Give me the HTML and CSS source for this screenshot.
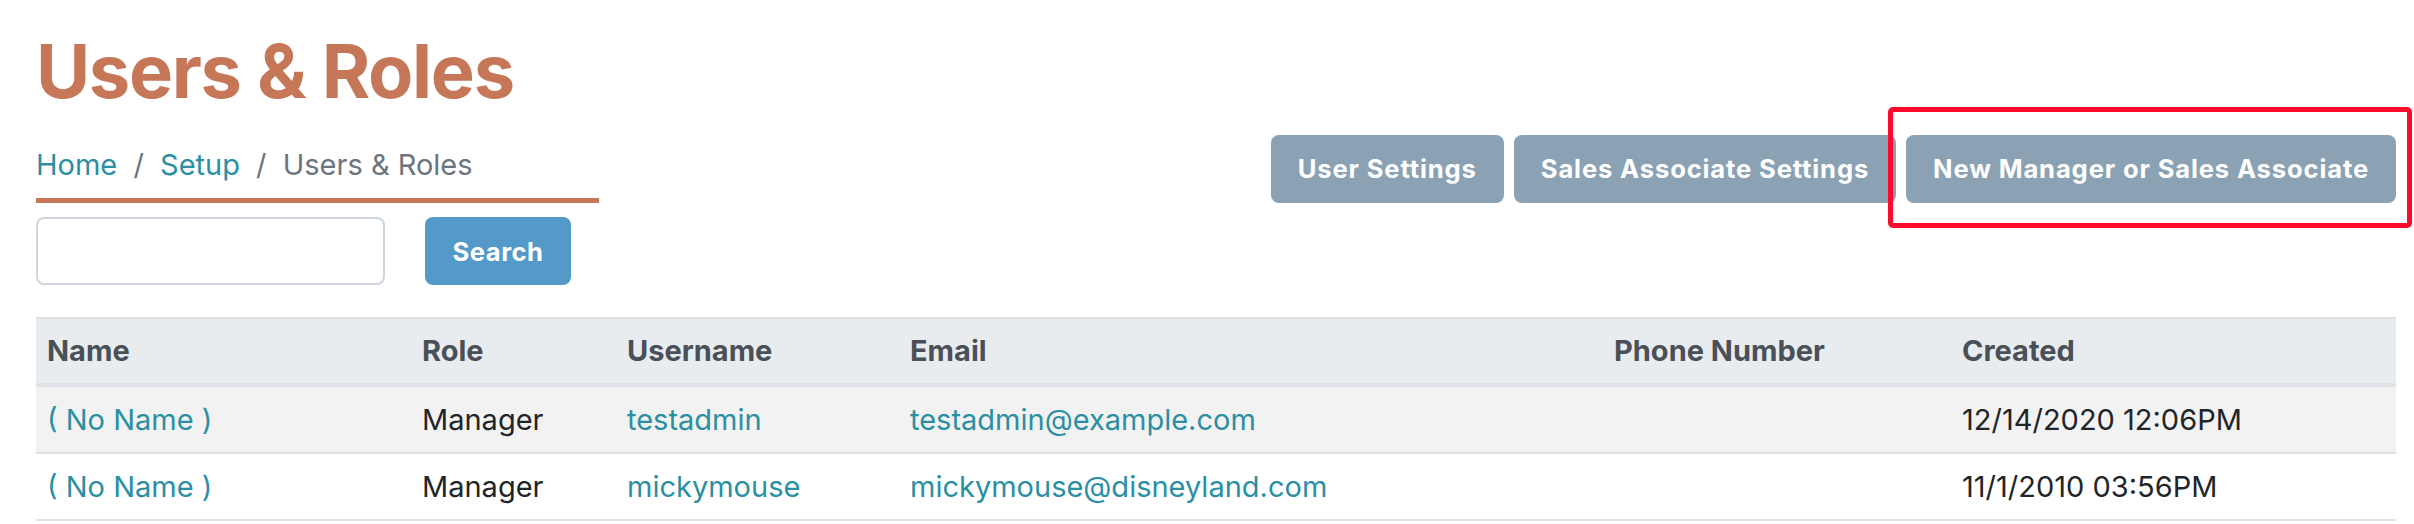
FILE: index.html
```html
<!DOCTYPE html>
<html lang="en">
<head>
  <meta charset="UTF-8">
  <meta name="viewport" content="width=device-width, initial-scale=1.0">
  <title>Users &amp; Roles</title>
  <link rel="stylesheet" href="styles.css">
</head>
<body>
  <div class="page">
    <h1 class="page-title">Users &amp; Roles</h1>

    <div class="top-bar">
      <nav class="breadcrumb">
        <a href="#">Home</a>
        <span class="sep">/</span>
        <a href="#">Setup</a>
        <span class="sep">/</span>
        <span class="current">Users &amp; Roles</span>
      </nav>

      <div class="actions">
        <button class="btn-gray">User Settings</button>
        <button class="btn-gray">Sales Associate Settings</button>
        <div class="highlight-wrap">
          <button class="btn-gray">New Manager or Sales Associate</button>
          <span class="highlight"></span>
        </div>
      </div>
    </div>

    <!-- search -->
    <form class="search-form" onsubmit="return false">
      <input type="text" class="search-input">
      <button type="submit" class="btn-search">Search</button>
    </form>

    <table class="users-table">
      <thead>
        <tr>
          <th class="col-name">Name</th>
          <th class="col-role">Role</th>
          <th class="col-user">Username</th>
          <th class="col-email">Email</th>
          <th class="col-phone">Phone Number</th>
          <th>Created</th>
        </tr>
      </thead>
      <tbody>
        <tr>
          <td><a href="#">( No Name )</a></td>
          <td>Manager</td>
          <td><a href="#">testadmin</a></td>
          <td><a href="#">testadmin@example.com</a></td>
          <td></td>
          <td>12/14/2020 12:06PM</td>
        </tr>
        <tr>
          <td><a href="#">( No Name )</a></td>
          <td>Manager</td>
          <td><a href="#">mickymouse</a></td>
          <td><a href="#">mickymouse@disneyland.com</a></td>
          <td></td>
          <td>11/1/2010 03:56PM</td>
        </tr>
      </tbody>
    </table>
  </div>
</body>
</html>
```

FILE: styles.css
```css
body {
  margin: 0;
  font-family: 'Inter', 'Roboto', sans-serif;
  font-size: 29px;
  color: #212529;
  background: #ffffff;
}

a {
  color: #2b8fa3;
  text-decoration: none;
}

.page {
  padding: 27px 18px 0 36px;
}

.page-title {
  margin: 0 0 19px 0;
  font-size: 74px;
  line-height: 89px;
  font-weight: 700;
  letter-spacing: -1.3px;
  color: #c67757;
}

.top-bar {
  display: flex;
  justify-content: space-between;
  align-items: flex-end;
}

.breadcrumb {
  width: 563px;
  line-height: 43.5px;
  padding-bottom: 12px;
  border-bottom: 5px solid #c67757;
  white-space: nowrap;
}

.breadcrumb .sep {
  color: #6c757d;
  padding: 0 8px;
}

.breadcrumb .current {
  color: #6c757d;
}

.actions {
  display: flex;
  gap: 10px;
}

.btn-gray {
  font-family: inherit;
  font-size: 25.6px;
  font-weight: 700;
  letter-spacing: 0.85px;
  line-height: 38px;
  padding: 15px 27px;
  color: #ffffff;
  background: #8ba2b4;
  border: none;
  border-radius: 8px;
}

.highlight-wrap {
  position: relative;
  display: flex;
}

.highlight {
  position: absolute;
  top: -28px;
  bottom: -25px;
  left: -18px;
  right: -16px;
  border: 5px solid #ff0a2c;
  border-radius: 5px;
  pointer-events: none;
}

.search-form {
  display: flex;
  gap: 40px;
  margin-top: 14px;
}

.search-input {
  width: 349px;
  height: 68px;
  box-sizing: border-box;
  border: 2px solid #cfd5dc;
  border-radius: 8px;
  font-size: 29px;
}

.btn-search {
  width: 146px;
  height: 68px;
  font-family: inherit;
  font-size: 25.6px;
  font-weight: 700;
  letter-spacing: 0.5px;
  color: #ffffff;
  background: #539ac8;
  border: none;
  border-radius: 8px;
}

.users-table {
  width: 100%;
  margin-top: 32px;
  border-collapse: collapse;
}

.users-table th,
.users-table td {
  text-align: left;
  padding: 11px;
  line-height: 43px;
  border-bottom: 2px solid #dee2e6;
  white-space: nowrap;
}

.users-table th {
  padding: 10px 11px;
  line-height: 44px;
  color: #495057;
  font-weight: 700;
  background: #e9ecef;
  border-top: 2px solid #dee2e6;
  border-bottom: 4px solid #dee2e6;
}

.users-table tbody tr:nth-child(odd) {
  background: #f2f2f2;
}

.col-name { width: 353px; }
.col-role { width: 183px; }
.col-user { width: 261px; }
.col-email { width: 682px; }
.col-phone { width: 326px; }
```
